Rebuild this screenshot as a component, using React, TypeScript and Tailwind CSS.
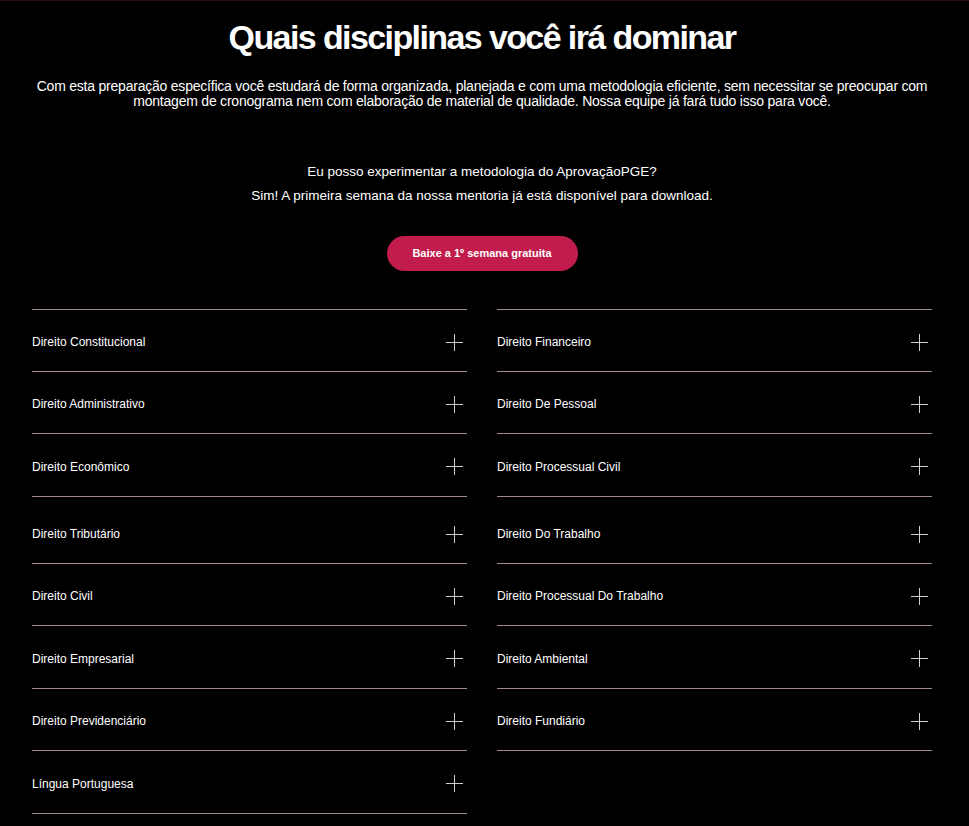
import React from 'react'

const left = [
  'Direito Constitucional',
  'Direito Administrativo',
  'Direito Econômico',
  'Direito Tributário',
  'Direito Civil',
  'Direito Empresarial',
  'Direito Previdenciário',
  'Língua Portuguesa',
]

const right = [
  'Direito Financeiro',
  'Direito De Pessoal',
  'Direito Processual Civil',
  'Direito Do Trabalho',
  'Direito Processual Do Trabalho',
  'Direito Ambiental',
  'Direito Fundiário',
]

const Plus = () => (
  <svg width="17" height="17" viewBox="0 0 17 17" fill="none" xmlns="http://www.w3.org/2000/svg">
    <path d="M8.5 0V17M0 8.5H17" stroke="#cfcfcf" strokeWidth="1" />
  </svg>
)

const Item = ({ label, first, gap }: { label: string; first?: boolean; gap?: boolean }) => (
  <div
    className={`flex items-center justify-between border-b border-[#a08890] pr-1 ${first ? 'border-t' : ''} ${gap ? 'h-[67px] pt-[9px]' : 'h-[62.5px] pt-[4px]'}`}
  >
    <span className="text-[12px] text-white">{label}</span>
    <Plus />
  </div>
)

export default function App() {
  return (
    <div className="min-h-[826px] w-full bg-black border-t border-[#2b0d1a] font-['Liberation_Sans',Arial,sans-serif] text-white">
      <section className="flex flex-col items-center pt-[16px] pr-[5px]">
        <h1 className="text-[34px] leading-[40px] font-bold tracking-[-1.6px]">
          Quais disciplinas você irá dominar
        </h1>
        <p className="mt-[22px] w-[900px] text-center text-[14px] leading-[14.5px] tracking-[-0.22px]">
          Com esta preparação específica você estudará de forma organizada, planejada e com uma metodologia eficiente, sem necessitar se preocupar com montagem de cronograma nem com elaboração de material de qualidade. Nossa equipe já fará tudo isso para você.
        </p>
        <p className="mt-[56px] text-[13.5px] leading-[16px]">
          Eu posso experimentar a metodologia do AprovaçãoPGE?
        </p>
        <p className="mt-[8px] text-[13.5px] leading-[16px]">
          Sim! A primeira semana da nossa mentoria já está disponível para download.
        </p>
        <button className="mt-[32px] h-[35px] w-[191px] rounded-full bg-[#c21c4c] text-[11px] font-bold text-white">
          Baixe a 1º semana gratuita
        </button>
      </section>
      <div className="ml-[32px] mt-[38px] grid w-[900px] grid-cols-2 gap-x-[30px]">
        <div className="flex flex-col">
          {left.map((l, i) => (
            <Item key={l} label={l} first={i === 0} gap={i === 3} />
          ))}
        </div>
        <div className="flex flex-col">
          {right.map((l, i) => (
            <Item key={l} label={l} first={i === 0} gap={i === 3} />
          ))}
        </div>
      </div>
    </div>
  )
}
